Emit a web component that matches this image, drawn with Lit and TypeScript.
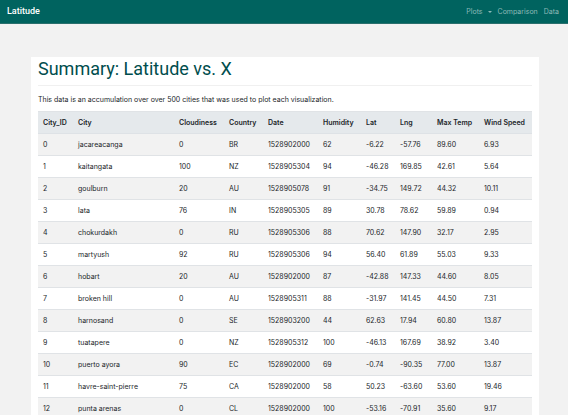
import { LitElement, html, css } from "lit";
import { customElement } from "lit/decorators.js";

const COLUMNS = [
  ["City_ID", "id"],
  ["City", "city"],
  ["Cloudiness", "cloud"],
  ["Country", "country"],
  ["Date", "date"],
  ["Humidity", "humidity"],
  ["Lat", "lat"],
  ["Lng", "lng"],
  ["Max Temp", "temp"],
  ["Wind Speed", "wind"],
];

const ROWS = [
  ["0", "jacareacanga", "0", "BR", "1528902000", "62", "-6.22", "-57.76", "89.60", "6.93"],
  ["1", "kaitangata", "100", "NZ", "1528905304", "94", "-46.28", "169.85", "42.61", "5.64"],
  ["2", "goulburn", "20", "AU", "1528905078", "91", "-34.75", "149.72", "44.32", "10.11"],
  ["3", "lata", "76", "IN", "1528905305", "89", "30.78", "78.62", "59.89", "0.94"],
  ["4", "chokurdakh", "0", "RU", "1528905306", "88", "70.62", "147.90", "32.17", "2.95"],
  ["5", "martyush", "92", "RU", "1528905306", "94", "56.40", "61.89", "55.03", "9.33"],
  ["6", "hobart", "20", "AU", "1528902000", "87", "-42.88", "147.33", "44.60", "8.05"],
  ["7", "broken hill", "0", "AU", "1528905311", "88", "-31.97", "141.45", "44.50", "7.31"],
  ["8", "harnosand", "0", "SE", "1528903200", "44", "62.63", "17.94", "60.80", "13.87"],
  ["9", "tuatapere", "0", "NZ", "1528905312", "100", "-46.13", "167.69", "38.92", "3.40"],
  ["10", "puerto ayora", "90", "EC", "1528902000", "69", "-0.74", "-90.35", "77.00", "13.87"],
  ["11", "havre-saint-pierre", "75", "CA", "1528902000", "58", "50.23", "-63.60", "53.60", "19.46"],
  ["12", "punta arenas", "0", "CL", "1528902000", "100", "-53.16", "-70.91", "35.60", "9.17"],
];

@customElement("app-root")
export class AppRoot extends LitElement {
  static styles = css`
    :host {
      display: block;
      min-height: 100vh;
      background: #f2f2f2;
      color: #212529;
      font: 7px/11px Inter, "Liberation Sans", sans-serif;
    }
    .navbar {
      box-sizing: border-box;
      height: 24px;
      padding: 0 9px 0 7px;
      display: flex;
      align-items: center;
      justify-content: space-between;
      background: #00635f;
      border-bottom: 1px solid #2a6f6d;
    }
    .brand {
      color: #fff;
      font-family: Roboto, "Liberation Sans", sans-serif;
      font-size: 9px;
      font-weight: 500;
      text-decoration: none;
    }
    .links {
      display: flex;
      gap: 6px;
    }
    .link {
      display: flex;
      align-items: center;
      gap: 5px;
      padding: 0;
      border: 0;
      background: none;
      font: inherit;
      color: #8ebab8;
      text-decoration: none;
    }
    .caret {
      border: 2px solid transparent;
      border-top-color: currentColor;
      border-bottom: 0;
    }
    .panel {
      margin: 33px 29px 0 31px;
      padding: 0 7px;
      background: #fff;
    }
    .title {
      margin: 0;
      padding: 0 0 5px;
      border-bottom: 1px solid #f0f0f0;
      color: #004d4d;
      font-family: Roboto, "Liberation Sans", sans-serif;
      font-size: 18px;
      line-height: 23px;
      font-weight: 400;
    }
    .intro {
      margin: 0;
      padding: 8px 0 6px;
    }
    .data {
      width: 100%;
      table-layout: fixed;
      border-collapse: collapse;
    }
    .cell {
      box-sizing: border-box;
      height: 22px;
      padding: 0 5px;
      border-top: 1px solid #e0e3e6;
      text-align: left;
      white-space: nowrap;
      font-weight: 400;
    }
    .head .cell {
      background: #e5e9ec;
      border-bottom: 1px solid #dee2e6;
      font-weight: 600;
    }
    .row:nth-child(odd) {
      background: #f2f2f2;
    }
    .id { width: 35px; }
    .cloud { width: 50px; }
    .country { width: 39px; }
    .date { width: 55px; }
    .humidity { width: 43px; }
    .lat { width: 34px; }
    .lng { width: 37px; }
    .temp { width: 47px; }
    .wind { width: 53px; }
  `;

  render() {
    return html`
      <nav class="navbar">
        <a class="brand" href="#">Latitude</a>
        <div class="links">
          <button class="link" type="button" aria-haspopup="true">Plots<span class="caret"></span></button>
          <a class="link" href="#comparison">Comparison</a>
          <a class="link" href="#data">Data</a>
        </div>
      </nav>
      <main class="panel">
        <h1 class="title">Summary: Latitude vs. X</h1>
        <p class="intro">This data is an accumulation over over 500 cities that was used to plot each visualization.</p>
        <table class="data">
          <colgroup>
            ${COLUMNS.map(([, name]) => html`<col class=${name} />`)}
          </colgroup>
          <thead class="head">
            <tr>
              ${COLUMNS.map(([label]) => html`<th class="cell" scope="col">${label}</th>`)}
            </tr>
          </thead>
          <tbody>
            ${ROWS.map(
              (row) => html`<tr class="row">${row.map((value) => html`<td class="cell">${value}</td>`)}</tr>`,
            )}
          </tbody>
        </table>
      </main>
    `;
  }
}
